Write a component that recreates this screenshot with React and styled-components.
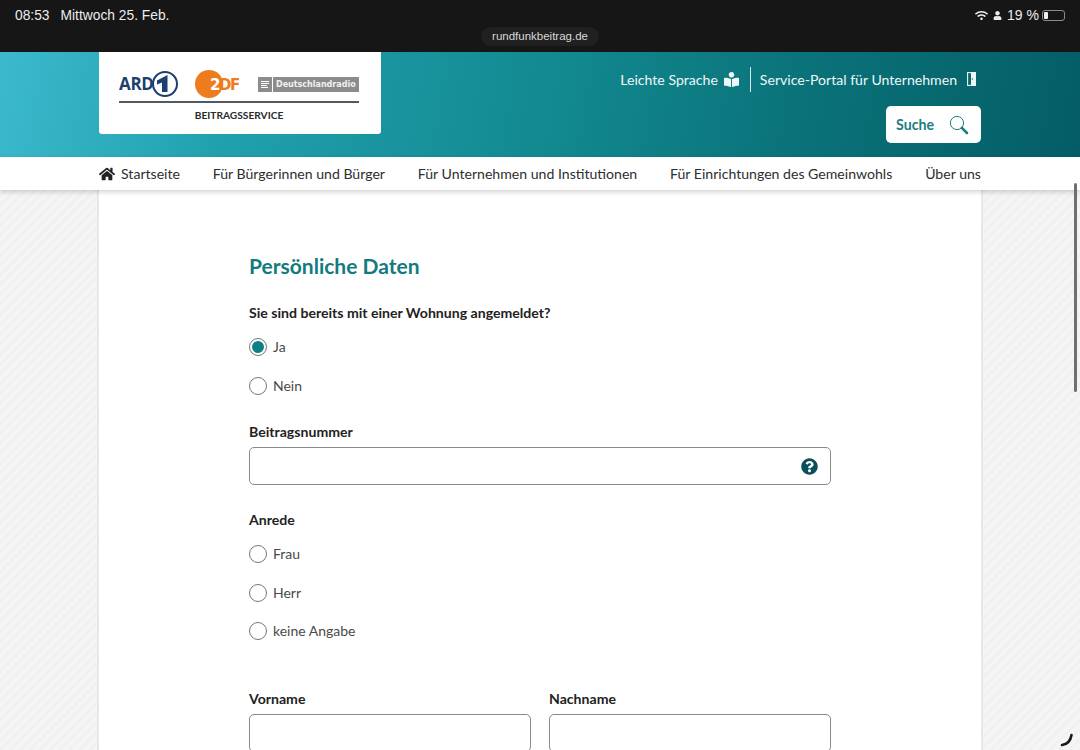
import React from "react";
import styled, { createGlobalStyle } from "styled-components";
import { FaHome, FaBookReader, FaQuestionCircle, FaWifi, FaUser } from "react-icons/fa";

const GlobalStyle = createGlobalStyle`
  html, body {
    margin: 0;
    padding: 0;
    background: #f3f3f3;
  }
  * {
    box-sizing: border-box;
  }
`;

const Page = styled.div`
  position: relative;
  width: 1080px;
  height: 750px;
  overflow: hidden;
  font-family: "Lato", "Liberation Sans", sans-serif;
  color: #2b2b2b;
  background-color: #f3f3f3;
  background-image: repeating-linear-gradient(
    135deg,
    #f5f5f5 0 4px,
    #f1f1f1 4px 7px
  );
`;

const StatusBar = styled.div`
  height: 52px;
  background: #161616;
  color: #ececec;
  font-family: "Liberation Sans", sans-serif;
  font-size: 13.8px;
  display: flex;
  flex-direction: column;
  padding: 7px 15px 0 15px;
`;

const StatusRow = styled.div`
  display: flex;
  justify-content: space-between;
  align-items: center;
  height: 16px;
`;

const StatusLeft = styled.div`
  display: flex;
  gap: 11px;
`;

const StatusRight = styled.div`
  display: flex;
  align-items: center;
  gap: 5px;
  font-size: 14px;
`;

const Battery = styled.span`
  display: inline-block;
  position: relative;
  width: 23px;
  height: 11px;
  margin-left: -2px;
  border: 1px solid #8b8b8b;
  border-radius: 3px;
  &::before {
    content: "";
    position: absolute;
    left: 1px;
    top: 1px;
    bottom: 1px;
    width: 4px;
    background: #f2f2f2;
    border-radius: 1px;
  }
`;

const UrlPill = styled.div`
  align-self: center;
  margin-top: 4px;
  height: 19px;
  width: 118px;
  border-radius: 10px;
  background: #202020;
  color: #d8d8d8;
  font-size: 11.5px;
  line-height: 18px;
  text-align: center;
`;

const Header = styled.header`
  height: 105px;
  background: linear-gradient(100deg, #3cb9cd 0%, #20a0ad 22%, #12888f 52%, #0a7178 75%, #045d66 100%);
`;

const Inner = styled.div`
  width: 882px;
  margin: 0 auto;
  display: flex;
  justify-content: space-between;
`;

const LogoCard = styled.div`
  width: 282px;
  height: 82px;
  background: #fff;
  border-radius: 0 0 3px 3px;
  padding: 18px 22px 0 20px;
  display: flex;
  flex-direction: column;
`;

const Logos = styled.div`
  display: flex;
  align-items: center;
  justify-content: space-between;
  height: 28px;
`;

const LogoRule = styled.div`
  height: 2px;
  background: #55595f;
  margin-top: 3px;
`;

const LogoCaption = styled.div`
  font-size: 10.2px;
  font-weight: 700;
  color: #2b2b2b;
  text-align: center;
  margin-top: 6px;
`;

const DeutschlandBadge = styled.div`
  width: 101px;
  height: 15px;
  background: #8c8c8c;
  display: flex;
  align-items: center;
  color: #f1f1f1;
  font-family: "DejaVu Sans", sans-serif;
  font-size: 8px;
  font-weight: 700;
  white-space: nowrap;
`;

const BadgeIcon = styled.span`
  width: 15px;
  height: 15px;
  display: flex;
  flex-direction: column;
  justify-content: center;
  gap: 1px;
  padding: 0 3px;
  border-right: 1px solid #fff;
  margin-right: 3px;
  flex-shrink: 0;
`;

const BadgeLine = styled.i`
  display: block;
  height: 1px;
  background: #fff;
  width: ${(p) => p.$w}px;
`;

const HeaderRight = styled.div`
  display: flex;
  flex-direction: column;
  align-items: flex-end;
`;

const TopLinks = styled.div`
  display: flex;
  align-items: center;
  height: 26px;
  margin-top: 14px;
  margin-right: 5px;
  color: #eef7f7;
  font-size: 14.1px;
`;

const TopLink = styled.span`
  display: flex;
  align-items: center;
  gap: ${(p) => p.$gap}px;
`;

const Divider = styled.span`
  width: 1px;
  height: 25px;
  background: #d5eaea;
  margin: 0 9px 0 11px;
`;

const SearchButton = styled.div`
  width: 95px;
  height: 37px;
  margin-top: 14px;
  background: #fff;
  border-radius: 5px;
  display: flex;
  align-items: center;
  justify-content: space-between;
  padding: 0 12px 0 10px;
  color: #1c7d80;
  font-size: 14.2px;
  font-weight: 700;
`;

const Nav = styled.nav`
  position: relative;
  z-index: 2;
  height: 33px;
  background: #fff;
  box-shadow: 0 2px 5px rgba(0, 0, 0, 0.18);
`;

const NavList = styled(Inner)`
  height: 33px;
  align-items: center;
  font-size: 14.1px;
  color: #2e2e2e;
`;

const NavItem = styled.span`
  display: flex;
  align-items: center;
  gap: 6px;
`;

const Card = styled.main`
  width: 882px;
  height: 560px;
  margin: 0 auto;
  background: #fff;
  box-shadow: 0 0 0 2px #e8e8e8;
  padding: 62px 150px 0 150px;
`;

const Heading = styled.h2`
  margin: 0;
  font-size: 21px;
  line-height: 28px;
  font-weight: 700;
  color: #117b7e;
`;

const FieldLabel = styled.div`
  font-size: 14.1px;
  line-height: 20px;
  font-weight: 700;
  color: #222;
  margin-top: ${(p) => p.$top}px;
`;

const RadioRow = styled.div`
  display: flex;
  align-items: center;
  gap: 6px;
  height: 20px;
  margin-top: ${(p) => p.$top}px;
  font-size: 14px;
  color: #4a4a4a;
`;

const RadioText = styled.span`
  padding-bottom: 2px;
`;

const Radio = styled.span`
  width: 18px;
  height: 18px;
  border-radius: 50%;
  border: 1px solid #777;
  background: #fff;
  display: flex;
  align-items: center;
  justify-content: center;
  &::after {
    content: "";
    display: ${(p) => (p.$checked ? "block" : "none")};
    width: 12px;
    height: 12px;
    border-radius: 50%;
    background: #0d8086;
  }
`;

const InputBox = styled.div`
  height: 38px;
  margin-top: 5px;
  border: 1px solid #8a8a8a;
  border-radius: 5px;
  background: #fff;
  display: flex;
  align-items: center;
  justify-content: flex-end;
  padding-right: 12px;
  color: #0b4f59;
`;

const NameGrid = styled.div`
  display: grid;
  grid-template-columns: 282px 282px;
  column-gap: 18px;
  margin-top: 48px;
`;

const ScrollThumb = styled.div`
  position: absolute;
  right: 3px;
  top: 183px;
  width: 3px;
  height: 209px;
  background: #6f6f6f;
  border-radius: 2px;
  z-index: 3;
`;

const Spinner = styled.svg`
  position: absolute;
  right: 4px;
  bottom: 2px;
  z-index: 3;
`;

function ArdLogo() {
  return (
    <svg width="60" height="28" viewBox="0 0 60 28">
      <text x="0" y="20" fontFamily="Open Sans, sans-serif" fontWeight="700" fontSize="17" fill="#1d3f6e" letterSpacing="-0.3">
        ARD
      </text>
      <circle cx="46" cy="14" r="12" fill="none" stroke="#1d3f6e" strokeWidth="2" />
      <path d="M38 10.5 L48.5 5 V22 H43 V12.5 L38 14.5 Z" fill="#1d3f6e" />
    </svg>
  );
}

function ZdfLogo() {
  return (
    <svg width="48" height="28" viewBox="0 0 48 28">
      <circle cx="14" cy="14" r="14" fill="#ee7b1e" />
      <text x="15" y="19.5" fontFamily="DejaVu Sans, sans-serif" fontWeight="700" fontSize="15" fill="#fff" letterSpacing="-1">
        2
      </text>
      <text x="24" y="19.5" fontFamily="DejaVu Sans, sans-serif" fontWeight="700" fontSize="15" fill="#ee7b1e" letterSpacing="-1.4">
        DF
      </text>
    </svg>
  );
}

function DoorIcon() {
  return (
    <svg width="9" height="14" viewBox="0 0 9 14">
      <rect x="0.6" y="0.6" width="7.8" height="12.8" fill="none" stroke="#eef7f7" strokeWidth="1.1" />
      <path d="M4 0 L9 0 V14 L4 14 Z" fill="#eef7f7" />
      <circle cx="5.4" cy="7" r="0.8" fill="#1a7a80" />
    </svg>
  );
}

function SearchIcon() {
  return (
    <svg width="20" height="20" viewBox="0 0 20 20">
      <circle cx="8" cy="8" r="6.6" fill="none" stroke="#1c7d80" strokeWidth="1" />
      <path d="M12.8 12.8 L18 18" stroke="#1c7d80" strokeWidth="2.6" strokeLinecap="round" />
    </svg>
  );
}

export default function App() {
  return (
    <Page>
      <GlobalStyle />
      <StatusBar>
        <StatusRow>
          <StatusLeft>
            <span>08:53</span>
            <span>Mittwoch 25. Feb.</span>
          </StatusLeft>
          <StatusRight>
            <FaWifi size={13} />
            <FaUser size={9} />
            <span>19 %</span>
            <Battery />
          </StatusRight>
        </StatusRow>
        <UrlPill>rundfunkbeitrag.de</UrlPill>
      </StatusBar>

      <Header>
        <Inner>
          <LogoCard>
            <Logos>
              <ArdLogo />
              <ZdfLogo />
              <DeutschlandBadge>
                <BadgeIcon>
                  <BadgeLine $w={8} />
                  <BadgeLine $w={8} />
                  <BadgeLine $w={6} />
                  <BadgeLine $w={7} />
                </BadgeIcon>
                Deutschlandradio
              </DeutschlandBadge>
            </Logos>
            <LogoRule />
            <LogoCaption>BEITRAGSSERVICE</LogoCaption>
          </LogoCard>
          <HeaderRight>
            <TopLinks>
              <TopLink $gap={6}>
                Leichte Sprache <FaBookReader size={15} />
              </TopLink>
              <Divider />
              <TopLink $gap={10}>
                Service-Portal für Unternehmen <DoorIcon />
              </TopLink>
            </TopLinks>
            <SearchButton>
              Suche <SearchIcon />
            </SearchButton>
          </HeaderRight>
        </Inner>
      </Header>

      <Nav>
        <NavList>
          <NavItem>
            <FaHome size={16} color="#222" /> Startseite
          </NavItem>
          <NavItem>Für Bürgerinnen und Bürger</NavItem>
          <NavItem>Für Unternehmen und Institutionen</NavItem>
          <NavItem>Für Einrichtungen des Gemeinwohls</NavItem>
          <NavItem>Über uns</NavItem>
        </NavList>
      </Nav>

      <Card>
        <Heading>Persönliche Daten</Heading>
        <FieldLabel $top={23}>Sie sind bereits mit einer Wohnung angemeldet?</FieldLabel>
        <RadioRow $top={14}>
          <Radio $checked /> <RadioText>Ja</RadioText>
        </RadioRow>
        <RadioRow $top={19}>
          <Radio /> <RadioText>Nein</RadioText>
        </RadioRow>
        <FieldLabel $top={26}>Beitragsnummer</FieldLabel>
        <InputBox>
          <FaQuestionCircle size={17} />
        </InputBox>
        <FieldLabel $top={25}>Anrede</FieldLabel>
        <RadioRow $top={14}>
          <Radio /> <RadioText>Frau</RadioText>
        </RadioRow>
        <RadioRow $top={19}>
          <Radio /> <RadioText>Herr</RadioText>
        </RadioRow>
        <RadioRow $top={18}>
          <Radio /> <RadioText>keine Angabe</RadioText>
        </RadioRow>
        <NameGrid>
          <div>
            <FieldLabel $top={0}>Vorname</FieldLabel>
            <InputBox />
          </div>
          <div>
            <FieldLabel $top={0}>Nachname</FieldLabel>
            <InputBox />
          </div>
        </NameGrid>
      </Card>

      <ScrollThumb />
      <Spinner width="16" height="18" viewBox="0 0 16 18">
        <path d="M2 15 C7 14.5 10.5 11 11.5 5" fill="none" stroke="#1a1a1a" strokeWidth="2.6" strokeLinecap="round" />
      </Spinner>
    </Page>
  );
}
